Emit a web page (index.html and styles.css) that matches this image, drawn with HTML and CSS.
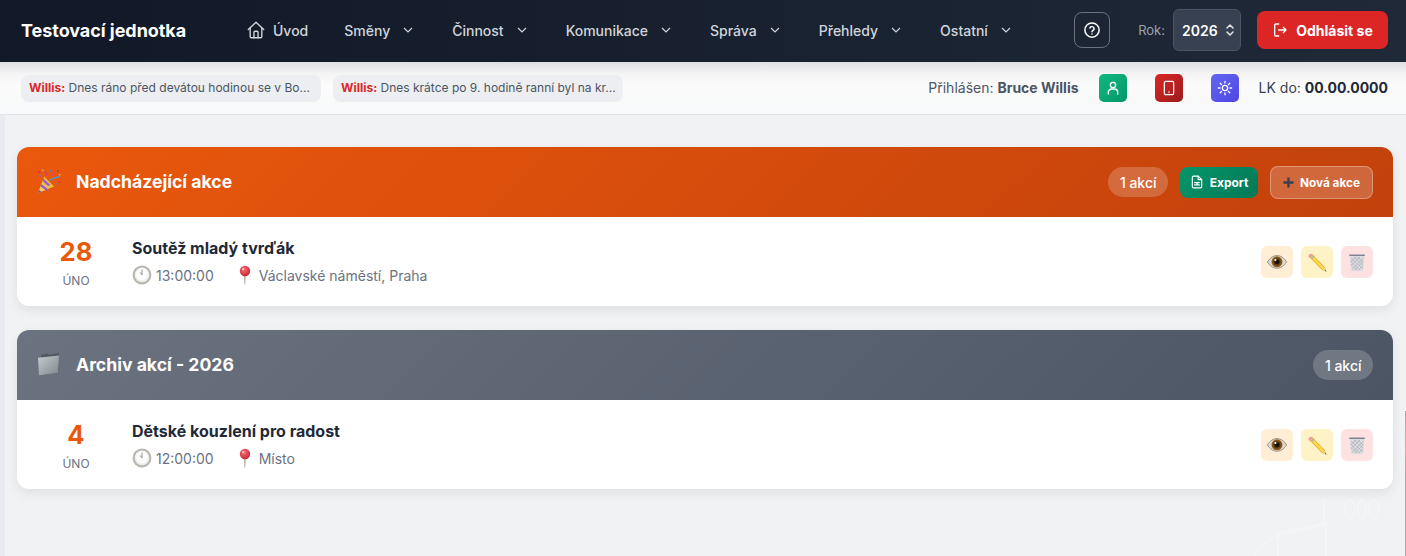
FILE: index.html
```html
<!DOCTYPE html>
<html lang="cs">
<head>
<meta charset="utf-8">
<title>Testovací jednotka</title>
<link rel="stylesheet" href="styles.css">
</head>
<body>
<svg class="defs" aria-hidden="true">
  <defs>
    <linearGradient id="gCone" x1="0" y1="1" x2="1" y2="0"><stop offset="0" stop-color="#f8e06c"/><stop offset="1" stop-color="#e0a322"/></linearGradient>
    <linearGradient id="gFolder" x1="0" y1="0" x2="1" y2="1"><stop offset="0" stop-color="#c3cbce"/><stop offset="1" stop-color="#7d898e"/></linearGradient>
    <radialGradient id="gClock" cx=".5" cy=".45" r=".6"><stop offset=".6" stop-color="#fdfdfd"/><stop offset="1" stop-color="#dad7d2"/></radialGradient>
    <radialGradient id="gPin" cx=".4" cy=".35" r=".7"><stop offset="0" stop-color="#f4737b"/><stop offset="1" stop-color="#c5202c"/></radialGradient>
    <radialGradient id="gIris" cx=".5" cy=".5" r=".5"><stop offset=".3" stop-color="#3a2510"/><stop offset="1" stop-color="#a2691e"/></radialGradient>
    <symbol id="clock" viewBox="0 0 20 20"><circle cx="10" cy="10" r="9.400" fill="#b8b5af"/><circle cx="10" cy="10" r="7.400" fill="url(#gClock)"/><path d="M10 4.500V10L8 7.400" fill="none" stroke="#8a8a8a" stroke-width=".9"/></symbol>
    <symbol id="pin" viewBox="0 0 20 20"><path d="M9.200 9h1.400l-.4 10.500h-.6z" fill="#a08a76"/><circle cx="10" cy="6" r="5.200" fill="url(#gPin)"/><circle cx="8.200" cy="4.200" r="1.100" fill="#f9c5c8"/></symbol>
    <symbol id="eye" viewBox="0 0 20 20"><path d="M.4 10C3.300 5.400 6.500 3.600 10 3.600s6.700 1.800 9.600 6.400c-2.900 4.400-6.100 6.200-9.600 6.200S3.300 14.400.4 10z" fill="#dcd9d6" stroke="#77726e" stroke-width=".7"/><circle cx="10" cy="9.800" r="5.500" fill="url(#gIris)"/><circle cx="10" cy="9.800" r="2.400" fill="#1a120a"/><circle cx="8.400" cy="8" r="1.100" fill="#fff"/></symbol>
    <symbol id="pencil" viewBox="0 0 20 20"><path d="M5 2l12.800 13.100 1.700 4.400-4.500-1.500L2.300 4.900z" fill="#eeb02a"/><path d="M4.500 2.500l12.900 13.300-1.700 1.600L3 4.200z" fill="#fad94e"/><path d="M15.300 17.900l2.500-2.400 1.700 4z" fill="#e8cfa4"/><path d="M18.400 18.100l1.100 1.400-1.800-.6z" fill="#444"/><path d="M2.100 5.200C.5 3.600 3 .9 4.900 1.900l1 1L3.200 6z" fill="#ef9a9f"/><path d="M4 5.900l2.600-2.700 1 1L5 6.900z" fill="#a9aeb3"/></symbol>
    <symbol id="trash" viewBox="0 0 20 20"><path d="M2.500 3.500h15l-1.500 15a1 1 0 0 1-1 .8H5a1 1 0 0 1-1-.8z" fill="#dcdde1"/><path d="M4 6l12 11M7 5l9.400 8.400M10.500 5l6 5.200M3.600 9l9 9M3.800 12.500l6 5.500M16.600 6L5 17.500M13 5L4.300 13.300M9.500 5L3.600 9.600M16 10l-8.300 8M15.500 14l-4 4" stroke="#989ba2" stroke-width=".5" fill="none"/><rect x="2" y="2.400" width="16" height="1.700" rx=".8" fill="#7e848d"/></symbol>
    <symbol id="party" viewBox="0 0 26 26"><path d="M2 25L8.200 8.400 18.200 18.400z" fill="url(#gCone)"/><path d="M4.500 18.500l.9-2.400 7.200 5.500-2.600 1zM6.500 13l.9-2.400 7 6.500-2.400.9z" fill="#9c5bd6"/><path d="M2 25l1.200-3 2.200 1.800z" fill="#7a4bb0"/><path d="M13 12.500c3-1.500 7-4 11-3.600" stroke="#3f9fe0" stroke-width="1.400" fill="none"/><path d="M10.500 8c.2-2-.5-3.500-2-4.700" stroke="#d63a8e" stroke-width="1.200" fill="none"/><path d="M16 7.500c.8-1.600 2.200-2.700 3.400-3.300" stroke="#e0436e" stroke-width="1.200" fill="none"/><g fill="#d6324f"><rect x="2.500" y="3" width="2" height="2"/><rect x="21" y="2" width="1.800" height="1.800"/><rect x="22.400" y="13" width="1.600" height="1.600"/></g><g fill="#3e8fd8"><rect x="3" y="7" width="1.700" height="1.700"/><rect x="13.500" y="2" width="1.800" height="1.800"/><rect x="19" y="15" width="1.500" height="1.500"/></g><g fill="#e7b429"><rect x="6" y="1.600" width="1.500" height="1.500"/><rect x="23" y="6" width="1.500" height="1.500"/></g></symbol>
    <symbol id="folder" viewBox="0 0 26 26"><path d="M5 3.800l6.500-1.400 1.500 1.400 10-1.800v18L5 23z" fill="#4f5a60"/><path d="M2 6.800l21-2.400-.8 17.200L3 24.200z" fill="url(#gFolder)"/></symbol>
  </defs>
</svg>

<header class="topbar">
  <div class="brand">Testovací jednotka</div>
  <nav class="nav">
    <a class="nav-item nav-home">
      <svg class="home-icon" viewBox="0 0 24 24" fill="none" stroke="currentColor" stroke-width="1.700" stroke-linecap="round" stroke-linejoin="round"><path d="M2.500 11.500 12 2.500l9.500 9"/><path d="M4.800 9.500V20a1.500 1.500 0 0 0 1.500 1.500h11.400a1.500 1.500 0 0 0 1.500-1.500V9.500"/><path d="M9.500 21.500v-7a1 1 0 0 1 1-1h3a1 1 0 0 1 1 1v7"/></svg>
      Úvod
    </a>
    <a class="nav-item">Směny <svg class="chev" viewBox="0 0 12 12"><path d="M2 4l4 4 4-4"/></svg></a>
    <a class="nav-item">Činnost <svg class="chev" viewBox="0 0 12 12"><path d="M2 4l4 4 4-4"/></svg></a>
    <a class="nav-item">Komunikace <svg class="chev" viewBox="0 0 12 12"><path d="M2 4l4 4 4-4"/></svg></a>
    <a class="nav-item">Správa <svg class="chev" viewBox="0 0 12 12"><path d="M2 4l4 4 4-4"/></svg></a>
    <a class="nav-item">Přehledy <svg class="chev" viewBox="0 0 12 12"><path d="M2 4l4 4 4-4"/></svg></a>
    <a class="nav-item">Ostatní <svg class="chev" viewBox="0 0 12 12"><path d="M2 4l4 4 4-4"/></svg></a>
  </nav>
  <div class="top-right">
    <button class="help-btn">
      <svg viewBox="0 0 24 24" fill="none" stroke="currentColor" stroke-width="2" stroke-linecap="round" stroke-linejoin="round"><circle cx="12" cy="12" r="9.500"/><path d="M9.200 9.300a2.900 2.900 0 0 1 5.600 1c0 2-2.800 2.400-2.800 3.900"/><path d="M12 17.200h.01"/></svg>
    </button>
    <span class="year-label">Rok:</span>
    <div class="year-select">2026
      <svg viewBox="0 0 12 16" fill="none" stroke="currentColor" stroke-width="1.500" stroke-linecap="round" stroke-linejoin="round"><path d="M3 6l3-3 3 3M3 10l3 3 3-3"/></svg>
    </div>
    <button class="logout-btn">
      <svg viewBox="0 0 24 24" fill="none" stroke="currentColor" stroke-width="2" stroke-linecap="round" stroke-linejoin="round"><path d="M10 3H6a2 2 0 0 0-2 2v14a2 2 0 0 0 2 2h4"/><path d="M10 12h11M17 8l4 4-4 4"/></svg>
      Odhlásit se
    </button>
  </div>
</header>

<div class="subbar">
  <div class="chip chip-one"><b>Willis:</b> Dnes ráno před devátou hodinou se v Bo...</div>
  <div class="chip chip-two"><b>Willis:</b> Dnes krátce po 9. hodině ranní byl na kr...</div>
  <div class="sub-right">
    <span class="user">Přihlášen: <b>Bruce Willis</b></span>
    <div class="sq-group">
      <span class="sq sq-green"><svg viewBox="0 0 24 24" fill="none" stroke="currentColor" stroke-width="2" stroke-linecap="round"><circle cx="12" cy="7.500" r="4"/><path d="M5 21v-2.500a5 5 0 0 1 5-5h4a5 5 0 0 1 5 5V21"/></svg></span>
      <span class="sq sq-red"><svg viewBox="0 0 24 24" fill="none" stroke="currentColor" stroke-width="1.800" stroke-linecap="round"><rect x="5" y="2" width="14" height="20" rx="2"/><path d="M12 18h.01" stroke-width="2.200"/></svg></span>
      <span class="sq sq-blue"><svg viewBox="0 0 24 24" fill="none" stroke="currentColor" stroke-width="2" stroke-linecap="round"><circle cx="12" cy="12" r="4"/><path d="M12 2v2.500M12 19.500V22M2 12h2.500M19.500 12H22M4.900 4.900l1.800 1.800M17.300 17.300l1.800 1.800M4.900 19.100l1.800-1.800M17.300 6.700l1.800-1.800"/></svg></span>
    </div>
    <span class="lk">LK do: <b>00.00.0000</b></span>
  </div>
</div>

<main class="content">
  <section class="card">
    <div class="card-head head-orange">
      <svg class="head-emoji"><use href="#party"/></svg>
      <h2>Nadcházející akce</h2>
      <div class="head-actions">
        <span class="count">1 akcí</span>
        <button class="btn-export">
          <svg viewBox="0 0 24 24" fill="none" stroke="currentColor" stroke-width="2" stroke-linecap="round" stroke-linejoin="round"><path d="M14 2H6a2 2 0 0 0-2 2v16a2 2 0 0 0 2 2h12a2 2 0 0 0 2-2V8z"/><path d="M14 2v6h6M8 13h8M8 17h8M12 13v4"/></svg>
          Export
        </button>
        <button class="btn-new"><svg class="plus" viewBox="0 0 12 12"><path d="M6 .5v11M.5 6h11"/></svg>Nová akce</button>
      </div>
    </div>
    <div class="event">
      <div class="date"><span class="day">28</span><span class="month">ÚNO</span></div>
      <div class="info">
        <h3>Soutěž mladý tvrďák</h3>
        <div class="meta">
          <span class="meta-item"><svg class="meta-icon"><use href="#clock"/></svg>13:00:00</span>
          <span class="meta-item"><svg class="meta-icon"><use href="#pin"/></svg>Václavské náměstí, Praha</span>
        </div>
      </div>
      <div class="actions">
        <span class="act act-view"><svg><use href="#eye"/></svg></span>
        <span class="act act-edit"><svg><use href="#pencil"/></svg></span>
        <span class="act act-del"><svg><use href="#trash"/></svg></span>
      </div>
    </div>
  </section>

  <section class="card">
    <div class="card-head head-gray">
      <svg class="head-emoji"><use href="#folder"/></svg>
      <h2>Archiv akcí - 2026</h2>
      <div class="head-actions">
        <span class="count">1 akcí</span>
      </div>
    </div>
    <div class="event">
      <div class="date"><span class="day">4</span><span class="month">ÚNO</span></div>
      <div class="info">
        <h3>Dětské kouzlení pro radost</h3>
        <div class="meta">
          <span class="meta-item"><svg class="meta-icon"><use href="#clock"/></svg>12:00:00</span>
          <span class="meta-item"><svg class="meta-icon"><use href="#pin"/></svg>Místo</span>
        </div>
      </div>
      <div class="actions">
        <span class="act act-view"><svg><use href="#eye"/></svg></span>
        <span class="act act-edit"><svg><use href="#pencil"/></svg></span>
        <span class="act act-del"><svg><use href="#trash"/></svg></span>
      </div>
    </div>
  </section>

  <svg class="watermark" viewBox="0 0 130 62" fill="none" stroke="#f4f5f6" stroke-width="2" aria-hidden="true">
    <path d="M0 62c6-10 12-16 20-20l50-12V4"/>
    <path d="M24 62V38l48-10v34"/>
    <ellipse cx="96" cy="14" rx="5" ry="9"/><ellipse cx="108" cy="14" rx="4" ry="9"/><ellipse cx="120" cy="14" rx="5" ry="9"/>
  </svg>
  <span class="edge-line"></span>
</main>
</body>
</html>
```
FILE: styles.css
```css
* { box-sizing: border-box; }
html, body { margin: 0; padding: 0; height: 100%; }
body {
  font-family: Inter, "Liberation Sans", sans-serif;
  background: #f1f2f4;
  overflow: hidden;
  color: #1f2937;
}
.defs { display: block; width: 0; height: 0; }

.topbar {
  height: 62px;
  display: flex;
  align-items: center;
  padding: 0 18px 2px 21px;
  background: linear-gradient(90deg, #111827, #1f2937);
  position: relative;
  z-index: 2;
}
.brand { font-size: 18px; font-weight: 700; color: #fff; width: 226px; letter-spacing: -.05px; }
.nav { display: flex; align-items: center; }
.nav-item {
  display: flex;
  align-items: center;
  font-size: 14px;
  font-weight: 500;
  color: #d1d5db;
  margin-right: 38px;
  white-space: nowrap;
}
.nav-home { margin-right: 36px; }
.home-icon { width: 18px; height: 18px; margin-right: 8px; transform: scale(1.08); }
.chev { width: 12px; height: 12px; margin-left: 12px; fill: none; stroke: #d1d5db; stroke-width: 1.2; }
.top-right { margin-left: auto; display: flex; align-items: center; }
.help-btn {
  width: 36px; height: 36px;
  padding: 0;
  display: flex; align-items: center; justify-content: center;
  background: transparent;
  border: 1px solid #6b7280;
  border-radius: 8px;
  color: #fff;
  margin-right: 28px;
}
.help-btn svg { width: 18px; height: 18px; }
.year-label { font-size: 13px; color: #9ca3af; margin-right: 8px; }
.year-select {
  width: 68px; height: 42px;
  display: flex; align-items: center; justify-content: space-between;
  padding: 0 4px 0 8px;
  background: #374151;
  border: 1px solid #4b5563;
  border-radius: 6px;
  color: #fff;
  font-size: 14px;
  font-weight: 600;
  margin-right: 16px;
}
.year-select svg { width: 12px; height: 16px; color: #e5e7eb; }
.logout-btn {
  width: 131px; height: 38px;
  display: flex; align-items: center; justify-content: center; gap: 8px;
  background: #dc2626;
  border: 0;
  border-radius: 8px;
  color: #fff;
  font: 700 14px Inter, sans-serif;
}
.logout-btn svg { width: 16px; height: 16px; }

.subbar {
  height: 53px;
  display: flex;
  align-items: center;
  padding: 0 18px 1px 21px;
  background: linear-gradient(180deg, #dfe0e2, #f4f4f5 22%, #fbfbfb 45%, #f7f8f9);
  border-bottom: 1px solid #e2e4ea;
}
.chip {
  height: 27px;
  margin-top: 1px;
  display: flex; align-items: center;
  padding: 0 8px 1px;
  background: #eceef1;
  border-radius: 8px;
  font-size: 12px;
  color: #4b5563;
  white-space: pre;
  overflow: hidden;
}
.chip b { color: #dc2626; font-weight: 700; }
.chip-one { width: 300px; margin-right: 12px; }
.chip-two { width: 290px; }
.sub-right { margin-left: auto; display: flex; align-items: center; }
.user { font-size: 14px; color: #4b5563; white-space: pre; }
.user b { font-weight: 700; }
.sq-group { display: flex; gap: 28px; margin: 0 20px; }
.sq {
  width: 28px; height: 28px;
  display: flex; align-items: center; justify-content: center;
  border-radius: 5px;
  color: #fff;
}
.sq svg { width: 16px; height: 16px; }
.sq-green { background: linear-gradient(135deg, #10b981, #059669); }
.sq-red { background: linear-gradient(135deg, #dc2626, #991b1b); }
.sq-blue { background: linear-gradient(135deg, #6366f1, #4f46e5); }
.lk { font-size: 14px; color: #374151; white-space: pre; }
.lk b { color: #1f2937; font-weight: 700; }

.content {
  position: relative;
  height: 442px;
  padding: 32px 13px 0 12px;
  border-left: 5px solid #e9eaf0;
  display: flex;
  flex-direction: column;
  gap: 24px;
}
.card {
  position: relative;
  height: 159px;
  background: #fff;
  border-radius: 12px;
  overflow: hidden;
  box-shadow: 0 4px 12px rgba(0, 0, 0, .08);
}
.card-head {
  height: 70px;
  display: flex;
  align-items: center;
  padding: 0 20px 0 19px;
  color: #fff;
}
.head-orange { background: linear-gradient(135deg, #ea580c, #c2410c); }
.head-gray { background: linear-gradient(135deg, #6b7280, #4b5563); }
.head-emoji { width: 26px; height: 26px; margin-right: 14px; margin-bottom: 3px; }
.card-head h2 { font-size: 17.6px; font-weight: 700; margin: 0 0 2px; }
.head-actions { margin-left: auto; display: flex; align-items: center; gap: 12px; }
.count {
  height: 30px;
  padding: 0 11.5px;
  display: flex; align-items: center;
  border-radius: 15px;
  background: rgba(255, 255, 255, .2);
  font-size: 14px;
  font-weight: 500;
}
.btn-export {
  width: 78px; height: 31px;
  display: flex; align-items: center; justify-content: center; gap: 6px;
  background: linear-gradient(135deg, #059669, #047857);
  border: 0;
  border-radius: 8px;
  color: #fff;
  font: 700 12px Inter, sans-serif;
}
.btn-export svg { width: 14px; height: 14px; }
.btn-new {
  width: 103px; height: 33px;
  padding: 1px 0 0;
  display: flex; align-items: center; justify-content: center; gap: 6px;
  background: rgba(255, 255, 255, .2);
  border: 1px solid rgba(255, 255, 255, .3);
  border-radius: 8px;
  color: #fff;
  font: 700 11.8px Inter, sans-serif;
}
.plus { width: 11px; height: 11px; fill: none; stroke: #374151; stroke-width: 2.6; }

.event { height: 89px; display: flex; align-items: center; padding: 0 20px 0 0; }
.date { width: 115px; flex: none; padding-left: 3px; display: flex; flex-direction: column; align-items: center; }
.day { font-size: 25.6px; font-weight: 700; color: #ea580c; line-height: 29px; margin-top: 2px; }
.month { font-size: 12px; color: #6b7280; line-height: 15px; margin-top: 7px; }
.info { margin-top: -2px; }
.info h3 { margin: 0 0 5px; font-size: 16px; font-weight: 700; color: #1f2937; line-height: 24px; }
.meta { display: flex; gap: 21px; font-size: 14px; color: #6b7280; }
.meta-item { display: flex; align-items: center; gap: 4px; }
.meta-icon { width: 20px; height: 20px; }
.actions { margin-left: auto; display: flex; gap: 8px; }
.act {
  width: 32px; height: 32px;
  display: flex; align-items: center; justify-content: center;
  border-radius: 6px;
}
.act svg { width: 20px; height: 20px; }
.act-view { background: #ffedd5; }
.act-edit { background: #fef3c7; }
.act-del { background: #fee2e2; }

.watermark { position: absolute; right: 22px; bottom: 0; width: 130px; height: 62px; }
.edge-line {
  position: absolute;
  right: 0; top: 296px; bottom: 0;
  width: 1px;
  background: linear-gradient(180deg, #a8a8ae, #d4a9a9 25%, #a9a9b0 45%, #aaaab0);
}
```
